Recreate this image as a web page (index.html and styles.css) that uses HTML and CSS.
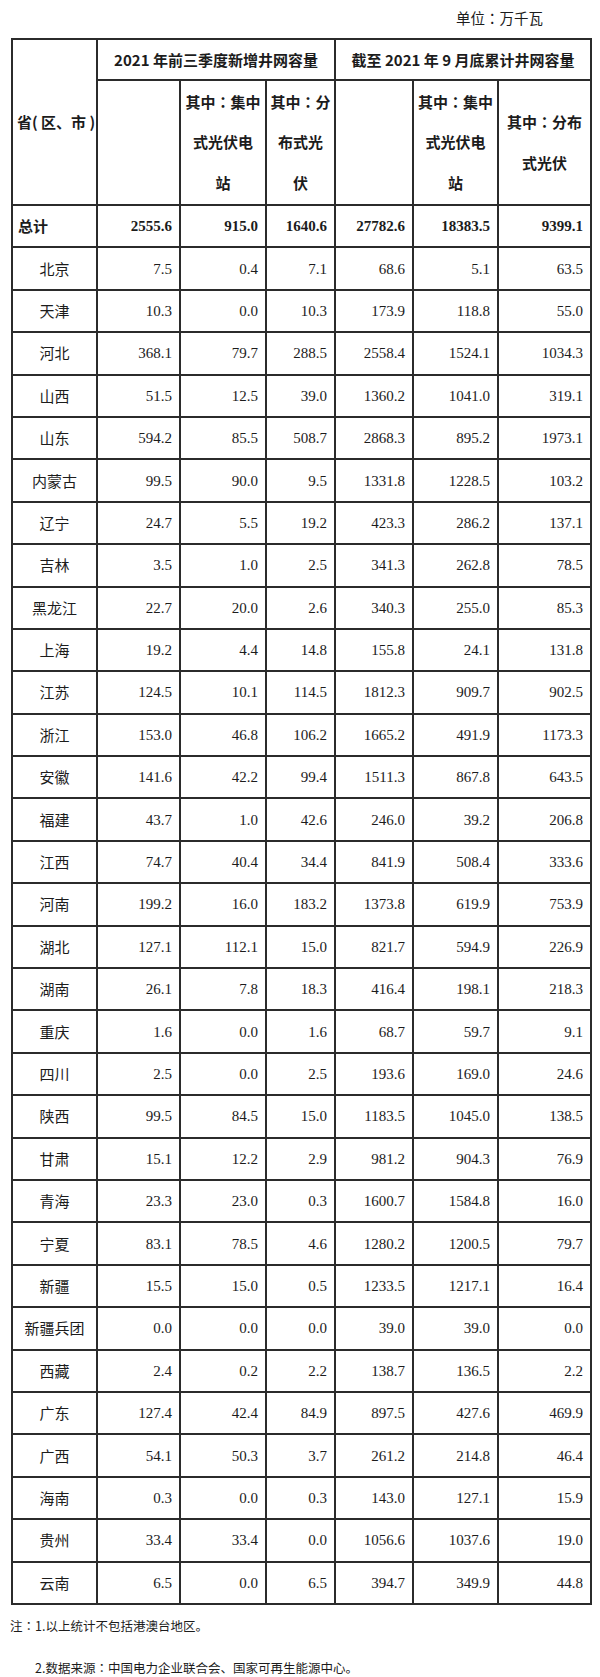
FILE: index.html
```html
<!DOCTYPE html>
<html lang="zh-CN">
<head>
<meta charset="utf-8">
<title>光伏并网容量</title>
<link rel="stylesheet" href="styles.css">
</head>
<body>
<div class="page">
  <div class="unit">单位<span class="colon" lang="zh-TW">：</span>万千瓦</div>
  <table class="grid">
    <colgroup>
      <col class="c1"><col class="c2"><col class="c3"><col class="c4"><col class="c5"><col class="c6"><col class="c7">
    </colgroup>
    <thead>
      <tr class="h1">
        <th rowspan="2" class="prov-head">省( 区、市 )</th>
        <th colspan="3">2021 年前三季度新增井网容量</th>
        <th colspan="3">截至 2021 年 9 月底累计井网容量</th>
      </tr>
      <tr class="h2">
        <th></th>
        <th>其中<span class="colon" lang="zh-TW">：</span>集中<br>式光伏电<br>站</th>
        <th>其中<span class="colon" lang="zh-TW">：</span>分<br>布式光<br>伏</th>
        <th></th>
        <th>其中<span class="colon" lang="zh-TW">：</span>集中<br>式光伏电<br>站</th>
        <th>其中<span class="colon" lang="zh-TW">：</span>分布<br>式光伏</th>
      </tr>
    </thead>
    <tbody>
      <tr class="total"><td class="name">总计</td><td>2555.6</td><td>915.0</td><td>1640.6</td><td>27782.6</td><td>18383.5</td><td>9399.1</td></tr>
      <tr><td class="name">北京</td><td>7.5</td><td>0.4</td><td>7.1</td><td>68.6</td><td>5.1</td><td>63.5</td></tr>
      <tr><td class="name">天津</td><td>10.3</td><td>0.0</td><td>10.3</td><td>173.9</td><td>118.8</td><td>55.0</td></tr>
      <tr><td class="name">河北</td><td>368.1</td><td>79.7</td><td>288.5</td><td>2558.4</td><td>1524.1</td><td>1034.3</td></tr>
      <tr><td class="name">山西</td><td>51.5</td><td>12.5</td><td>39.0</td><td>1360.2</td><td>1041.0</td><td>319.1</td></tr>
      <tr><td class="name">山东</td><td>594.2</td><td>85.5</td><td>508.7</td><td>2868.3</td><td>895.2</td><td>1973.1</td></tr>
      <tr><td class="name">内蒙古</td><td>99.5</td><td>90.0</td><td>9.5</td><td>1331.8</td><td>1228.5</td><td>103.2</td></tr>
      <tr><td class="name">辽宁</td><td>24.7</td><td>5.5</td><td>19.2</td><td>423.3</td><td>286.2</td><td>137.1</td></tr>
      <tr><td class="name">吉林</td><td>3.5</td><td>1.0</td><td>2.5</td><td>341.3</td><td>262.8</td><td>78.5</td></tr>
      <tr><td class="name">黑龙江</td><td>22.7</td><td>20.0</td><td>2.6</td><td>340.3</td><td>255.0</td><td>85.3</td></tr>
      <tr><td class="name">上海</td><td>19.2</td><td>4.4</td><td>14.8</td><td>155.8</td><td>24.1</td><td>131.8</td></tr>
      <tr><td class="name">江苏</td><td>124.5</td><td>10.1</td><td>114.5</td><td>1812.3</td><td>909.7</td><td>902.5</td></tr>
      <tr><td class="name">浙江</td><td>153.0</td><td>46.8</td><td>106.2</td><td>1665.2</td><td>491.9</td><td>1173.3</td></tr>
      <tr><td class="name">安徽</td><td>141.6</td><td>42.2</td><td>99.4</td><td>1511.3</td><td>867.8</td><td>643.5</td></tr>
      <tr><td class="name">福建</td><td>43.7</td><td>1.0</td><td>42.6</td><td>246.0</td><td>39.2</td><td>206.8</td></tr>
      <tr><td class="name">江西</td><td>74.7</td><td>40.4</td><td>34.4</td><td>841.9</td><td>508.4</td><td>333.6</td></tr>
      <tr><td class="name">河南</td><td>199.2</td><td>16.0</td><td>183.2</td><td>1373.8</td><td>619.9</td><td>753.9</td></tr>
      <tr><td class="name">湖北</td><td>127.1</td><td>112.1</td><td>15.0</td><td>821.7</td><td>594.9</td><td>226.9</td></tr>
      <tr><td class="name">湖南</td><td>26.1</td><td>7.8</td><td>18.3</td><td>416.4</td><td>198.1</td><td>218.3</td></tr>
      <tr><td class="name">重庆</td><td>1.6</td><td>0.0</td><td>1.6</td><td>68.7</td><td>59.7</td><td>9.1</td></tr>
      <tr><td class="name">四川</td><td>2.5</td><td>0.0</td><td>2.5</td><td>193.6</td><td>169.0</td><td>24.6</td></tr>
      <tr><td class="name">陕西</td><td>99.5</td><td>84.5</td><td>15.0</td><td>1183.5</td><td>1045.0</td><td>138.5</td></tr>
      <tr><td class="name">甘肃</td><td>15.1</td><td>12.2</td><td>2.9</td><td>981.2</td><td>904.3</td><td>76.9</td></tr>
      <tr><td class="name">青海</td><td>23.3</td><td>23.0</td><td>0.3</td><td>1600.7</td><td>1584.8</td><td>16.0</td></tr>
      <tr><td class="name">宁夏</td><td>83.1</td><td>78.5</td><td>4.6</td><td>1280.2</td><td>1200.5</td><td>79.7</td></tr>
      <tr><td class="name">新疆</td><td>15.5</td><td>15.0</td><td>0.5</td><td>1233.5</td><td>1217.1</td><td>16.4</td></tr>
      <tr><td class="name">新疆兵团</td><td>0.0</td><td>0.0</td><td>0.0</td><td>39.0</td><td>39.0</td><td>0.0</td></tr>
      <tr><td class="name">西藏</td><td>2.4</td><td>0.2</td><td>2.2</td><td>138.7</td><td>136.5</td><td>2.2</td></tr>
      <tr><td class="name">广东</td><td>127.4</td><td>42.4</td><td>84.9</td><td>897.5</td><td>427.6</td><td>469.9</td></tr>
      <tr><td class="name">广西</td><td>54.1</td><td>50.3</td><td>3.7</td><td>261.2</td><td>214.8</td><td>46.4</td></tr>
      <tr><td class="name">海南</td><td>0.3</td><td>0.0</td><td>0.3</td><td>143.0</td><td>127.1</td><td>15.9</td></tr>
      <tr><td class="name">贵州</td><td>33.4</td><td>33.4</td><td>0.0</td><td>1056.6</td><td>1037.6</td><td>19.0</td></tr>
      <tr><td class="name">云南</td><td>6.5</td><td>0.0</td><td>6.5</td><td>394.7</td><td>349.9</td><td>44.8</td></tr>
    </tbody>
  </table>
  <div class="notes">
    <p class="note">注<span class="colon" lang="zh-TW">：</span>1.以上统计不包括港澳台地区。</p>
    <p class="note note-indent">2.数据来源<span class="colon" lang="zh-TW">：</span>中国电力企业联合会、国家可再生能源中心。</p>
  </div>
</div>
</body>
</html>
```

FILE: styles.css
```css
html, body {
  margin: 0;
  padding: 0;
  background: #ffffff;
}

.page {
  width: 600px;
  color: #1c1c1c;
  font-family: "Noto Sans CJK SC", "Noto Sans", sans-serif;
}

.colon {
  font-family: "Noto Sans CJK TC", "Noto Sans CJK SC", sans-serif;
}

.unit {
  height: 38px;
  box-sizing: border-box;
  padding: 8px 57px 0 0;
  line-height: 20px;
  font-size: 14.5px;
  text-align: right;
}

.grid {
  margin-left: 11px;
  width: 579px;
  table-layout: fixed;
  border-collapse: collapse;
  border: 2px solid #2b2b2b;
}

.c1 { width: 85px; }
.c2 { width: 83px; }
.c3 { width: 86px; }
.c4 { width: 69px; }
.c5 { width: 78px; }
.c6 { width: 85px; }
.c7 { width: 93px; }

.grid th,
.grid td {
  border: 2px solid #2b2b2b;
  padding: 0;
}

.grid th {
  font-family: "Noto Sans CJK SC", "Noto Sans", sans-serif;
  font-weight: 700;
  font-size: 15px;
  text-align: center;
  vertical-align: middle;
}

.h1 { height: 41px; }
.h1 th { line-height: 20px; }

.h2 { height: 125px; }
.h2 th { line-height: 40.5px; }

.grid th.prov-head {
  text-align: left;
  padding-left: 4px;
  white-space: nowrap;
}

.grid tbody tr { height: 42.4px; }

.grid td {
  font-family: "Liberation Serif", "Times New Roman", serif;
  font-size: 15px;
  text-align: right;
  padding-right: 7px;
  line-height: 20px;
  vertical-align: middle;
}

.grid td.name {
  font-family: "Noto Sans CJK SC", "Noto Sans", sans-serif;
  text-align: center;
  padding-right: 0;
  font-size: 15px;
}

.total td {
  font-weight: 700;
}

.total td.name {
  text-align: left;
  padding-left: 5px;
}

.notes {
  padding-left: 10px;
}

.note {
  margin: 0;
  height: 42px;
  line-height: 42px;
  font-size: 12.5px;
}

.note-indent {
  padding-left: 25px;
}
```
